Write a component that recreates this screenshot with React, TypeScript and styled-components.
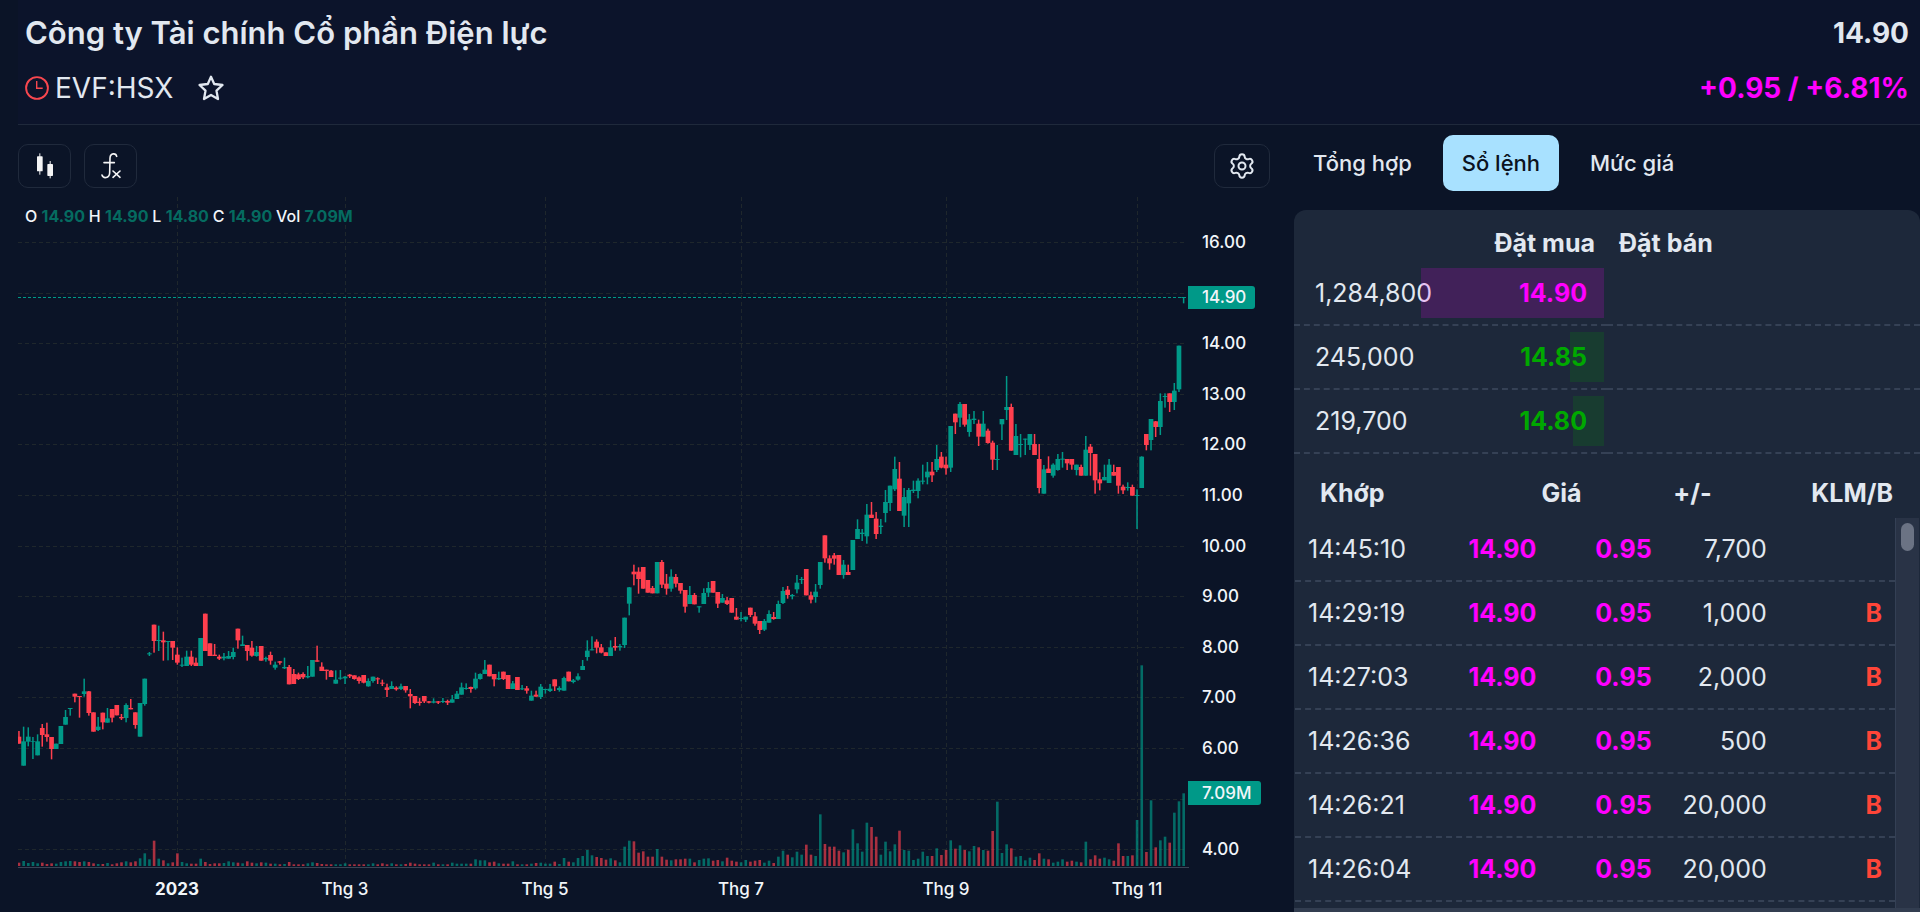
import React from "react";
import styled, { createGlobalStyle } from "styled-components";
import { Settings } from "lucide-react";

const colors = {
  page: "#0b1427",
  header: "#0c142b",
  panel: "#1d283a",
  track: "#293346",
  line: "#1f293b",
  rowLine: "#354155",
  text: "#e2e8f0",
  ceiling: "#ff00ff",
  up: "#00a800",
  sell: "#ff4538",
  candleUp: "#009988",
  candleDown: "#ff3f4e",
};

const GlobalStyle = createGlobalStyle`
  * { box-sizing: border-box; }
  body {
    margin: 0;
    background: ${colors.page};
    color: ${colors.text};
    font-family: Inter, "Noto Sans", sans-serif;
  }
  button { font: inherit; color: inherit; cursor: pointer; }
`;

const Page = styled.div`
  min-height: 100vh;
  display: flex;
  flex-direction: column;
  padding-left: 18px;
`;

const Header = styled.header`
  height: 125px;
  display: flex;
  justify-content: space-between;
  padding: 9px 11px 0 7px;
  background: ${colors.header};
  border-bottom: 1px solid ${colors.line};
`;

const HeaderSide = styled.div<{ $end?: boolean }>`
  display: flex;
  flex-direction: column;
  align-items: ${(p) => (p.$end ? "flex-end" : "flex-start")};
  gap: 7px;
`;

const Title = styled.h1`
  margin: 0;
  font-size: 31px;
  line-height: 48px;
  font-weight: 600;
`;

const Price = styled.div`
  font-size: 28px;
  line-height: 48px;
  font-weight: 700;
`;

const Change = styled(Price)`
  color: ${colors.ceiling};
`;

const SymbolRow = styled.div`
  display: flex;
  align-items: center;
  gap: 6px;
  font-size: 28px;
  line-height: 48px;
`;

const StarButton = styled.button`
  display: flex;
  margin-left: 18px;
  padding: 0;
  border: 0;
  background: none;
`;

const Main = styled.main`
  flex: 1;
  display: grid;
  grid-template-columns: minmax(0, 2fr) minmax(0, 1fr);
  column-gap: 24px;
`;

const ChartColumn = styled.section`
  padding-top: 19px;
`;

const Toolbar = styled.div`
  display: flex;
  gap: 13px;
`;

const ToolButton = styled.button<{ $last?: boolean }>`
  display: flex;
  align-items: center;
  justify-content: center;
  width: ${(p) => (p.$last ? 56 : 53)}px;
  height: 44px;
  margin-left: ${(p) => (p.$last ? "auto" : "0")};
  padding: 0;
  border: 1px solid #202a3c;
  border-radius: 10px;
  background: none;
`;

const Chart = styled.svg`
  display: block;
  width: 100%;
  height: auto;
  font-size: 17px;
  font-weight: 500;
  fill: #f1f5f9;
`;

const BookColumn = styled.section`
  display: flex;
  flex-direction: column;
  padding-top: 10px;
`;

const Tabs = styled.nav`
  display: flex;
  gap: 12px;
  margin-bottom: 19px;
`;

const Tab = styled.button<{ $active?: boolean }>`
  height: 56px;
  padding: 0 19px;
  border: 0;
  border-radius: 10px;
  font-size: 22px;
  font-weight: 500;
  background: ${(p) => (p.$active ? "#a8e1ff" : "none")};
  color: ${(p) => (p.$active ? "#0b1220" : colors.text)};
`;

const Panel = styled.div`
  flex: 1;
  display: flex;
  flex-direction: column;
  background: ${colors.panel};
  border-radius: 12px 12px 0 0;
  font-size: 25px;
  line-height: 32px;
  overflow: hidden;
`;

const Book = styled.table`
  width: 100%;
  table-layout: fixed;
  border-collapse: collapse;
`;

const BookHead = styled.th<{ $align: "left" | "right" }>`
  height: 51px;
  padding: 14px 12px 0;
  line-height: 34px;
  text-align: ${(p) => p.$align};
  font-weight: 700;
`;

const BookRow = styled.tr`
  height: 64px;
  border-bottom: 2px dashed ${colors.rowLine};
`;

const BookCell = styled.td`
  padding: 0;
`;

const Bid = styled.div`
  position: relative;
  display: flex;
  align-items: center;
  justify-content: space-between;
  height: 50px;
  margin-right: 3px;
  padding: 0 17px 0 21px;
`;

const DepthBar = styled.span<{ $tone: string }>`
  position: absolute;
  top: 0;
  right: 0;
  bottom: 0;
  background: ${(p) => p.$tone};
  opacity: 0.16;
`;

const BidPrice = styled.strong<{ $tone: string }>`
  font-weight: 700;
  color: ${(p) => p.$tone};
`;

const TradesBox = styled.div`
  position: relative;
  flex: 1;
  display: flex;
`;

const Trades = styled.table`
  flex: 1;
  display: flex;
  flex-direction: column;
`;

const TradesHead = styled.thead`
  display: block;
`;

const HeadRow = styled.tr`
  display: grid;
  grid-template-columns: 150fr 149fr 130fr 181fr;
  height: 64px;
  padding: 22px 15px 0 0;
`;

const HeadCell = styled.th`
  display: flex;
  justify-content: flex-end;
  padding-right: 12px;
  font-weight: 700;
  &:first-child {
    justify-content: flex-start;
    padding-left: 26px;
  }
`;

const TradesBody = styled.tbody`
  flex: 1;
  display: block;
  min-height: 390px;
  padding-left: 1px;
`;

const TradeRow = styled.tr`
  display: grid;
  grid-template-columns: 139fr 115fr 115fr 115fr 115fr;
  align-items: center;
  height: 64px;
  margin-right: 25px;
  border-bottom: 2px dashed ${colors.rowLine};
`;

const TradeCell = styled.td<{ $tone?: string }>`
  padding: 0 13px;
  text-align: right;
  color: ${(p) => p.$tone ?? "inherit"};
  font-weight: ${(p) => (p.$tone ? 700 : 400)};
  white-space: nowrap;
  &:first-child {
    text-align: left;
  }
`;

const ScrollTrack = styled.div`
  position: absolute;
  top: 64px;
  right: 1px;
  bottom: 0;
  width: 24px;
  padding: 5px 5px 0 5px;
  background: ${colors.track};
  border-left: 1px solid #344055;
`;

const ScrollThumb = styled.div`
  width: 13px;
  height: 28px;
  border-radius: 7px;
  background: #6b7384;
`;

const BottomTrack = styled.div`
  height: 4px;
  background: #323d50;
`;

type Candle = [string, number, number, number, number, number];

/* Each entry: direction, high, body top, body bottom, low, volume. All lengths are in thirds of a chart unit. */
const series: { base: number; rows: string }[] = [
  {
    base: 560,
    rows: `r513,530,551,551,10 g500,544,617,617,15 g502,530,545,559,9 g531,544,546,597,12 g523,544,586,586,8 r492,504,525,560,10
r488,523,531,545,6 r531,531,567,598,8 g551,551,567,567,7 g498,498,552,552,12 g450,471,494,494,14 g444,444,447,467,15
r401,401,410,427,14 r408,408,411,473,12 g356,394,402,410,14 r393,394,459,467,12 r457,457,515,515,8 g471,500,510,513,6
r458,458,487,508,6 g444,475,488,488,9 r447,447,473,487,5 r435,435,466,466,8 r462,471,475,480,11 g430,435,474,487,14
r417,444,448,448,11 r457,457,495,506,14 g429,429,530,530,23 g356,356,432,437,38 g276,280,283,288,20 r194,194,243,278,76
g197,240,243,273,22 r215,241,247,302,17 g243,243,246,301,8 r243,243,263,300,11 r262,284,308,314,38 g293,314,317,321,12
g272,290,318,318,8 r272,290,314,318,7 r293,308,318,318,7 g234,234,318,318,22 r161,161,273,273,12 r250,250,288,288,6
r252,284,288,288,8 r284,290,296,300,8 g279,290,295,301,9 g273,288,296,296,14 g263,276,291,298,11 r206,206,241,266,10
g227,253,258,258,8 r255,255,273,302,14 r243,263,287,290,10 g258,276,288,290,8 r258,258,302,302,11 g290,294,298,305,10
r275,285,302,314,7 g305,314,323,329,7 r303,304,308,314,5 g293,321,325,327,6 r315,321,373,373,12 r327,342,372,372,5
r338,343,357,360,5 r337,342,352,357,5 g318,348,352,355,8 g300,300,350,350,11 r257,301,305,305,9`,
  },
  {
    base: 600,
    rows: `r187,200,213,213,6 r209,209,213,239,5 r210,212,231,231,5 g211,239,251,251,5 g210,233,236,239,5 g228,230,235,252,8
r222,224,229,234,5 r226,226,237,239,5 r229,232,243,251,5 r225,225,248,250,5 g235,243,259,260,5 g230,230,243,248,8
r232,235,238,252,5 r239,248,251,258,8 r251,262,270,291,5 g244,258,267,267,8 r259,263,268,272,5 g251,259,267,270,5
r258,258,271,278,6 r267,282,289,325,10 r288,288,309,312,7 r294,305,309,317,5 r288,288,304,309,5 r303,304,308,310,5
g295,304,308,310,10 r303,304,308,312,5 g294,303,306,309,5 r299,303,308,315,5 g285,298,308,308,10 g273,281,297,297,7
g248,262,284,284,7 g250,264,267,269,7 r260,261,267,278,7 g218,236,265,269,20 g220,222,237,239,17 g180,209,222,222,17
r194,194,229,229,11 r222,222,238,259,13 g215,234,238,240,8 r215,215,237,240,7 r225,225,267,267,7 g243,250,267,267,14
r231,231,270,270,5 g255,265,268,270,5 r258,265,272,281,5 g272,287,302,302,7 r272,284,290,290,9 g252,260,291,297,10
g266,267,270,281,7 g252,266,273,276,7 r238,238,259,273,13 g259,264,270,275,6 g230,234,272,272,24 r215,215,244,244,13
g237,241,246,250,11 g220,229,239,242,24 g180,198,210,210,30 g121,152,171,182,48 g109,148,151,151,32 r118,125,143,160,27
r132,142,158,160,24 r157,157,168,168,19 g121,142,168,168,23 r111,138,143,152,17`,
  },
  {
    base: 520,
    rows: `g372,378,382,392,11 g293,293,375,384,58 g201,202,251,286,76 r134,155,163,196,74 r142,155,177,221,40 r141,141,206,206,44
r180,180,218,218,28 r198,204,220,220,28 g126,126,220,220,51 r120,126,194,204,28 r162,191,206,224,19 g148,170,206,215,17
r162,171,191,202,20 r189,189,212,221,20 r210,210,260,278,22 g198,225,252,252,22 r219,225,253,253,11 g259,259,262,278,18
g205,219,252,252,22 g186,204,218,231,23 r183,183,218,218,16 r216,216,251,264,18 g222,234,248,248,14 r231,241,252,255,25
r234,234,278,278,16 r264,290,299,299,13 g276,294,297,304,11 g290,290,299,306,18 r263,263,285,291,13 r276,289,311,317,16
r303,303,330,342,18 g297,303,329,333,10 g271,282,308,308,16 r276,291,297,299,9 g242,252,297,297,28 g201,213,249,252,46
r198,209,225,236,34 g222,225,229,238,26 g165,188,208,220,43 g171,177,180,192,34 r147,147,226,226,64 r215,226,239,250,34
g192,215,231,248,30 g126,126,195,206,155 r46,46,115,128,66 r106,115,130,149,58 r99,106,116,134,58 r105,105,165,165,46
g120,134,165,176,41 r134,156,165,165,49 g60,60,150,150,110 g-2,27,57,57,68`,
  },
  {
    base: 360,
    rows: `g507,518,522,543,43 g432,464,529,551,130 r426,464,474,474,117 r456,476,522,537,88 g477,497,501,522,34 g390,426,459,487,73
g377,377,429,453,44 g290,327,388,393,65 r306,356,453,453,106 g384,411,467,501,48 g384,390,430,501,46 g362,389,393,399,18
g355,362,393,415,22 g314,362,365,373,43 g306,335,352,373,30 r306,335,346,366,30 g255,297,330,336,53 r276,290,323,325,33
r290,314,325,344,48 g198,198,323,336,77 r161,161,187,222,52 g126,132,173,201,62 r132,132,194,200,48 g162,178,216,230,44
g153,176,180,192,60 r179,191,230,258,56 g153,191,230,230,48 r206,212,249,251,46 r242,248,299,330,105 g255,297,300,330,193
g177,177,193,240,39 g48,141,150,180,65 r131,141,272,272,53`,
  },
  {
    base: 320,
    rows: `g312,348,405,405,28 g342,372,375,412,30 g356,356,359,405,17 g342,342,375,390,25 r342,372,405,405,18 r372,417,504,520,38
g435,448,521,521,22 r409,446,459,459,20 g430,434,467,473,10 g402,417,450,452,13 g396,416,419,443,20 r417,417,430,450,13
r417,417,434,449,16 g434,434,450,466,13 r434,441,467,467,11 g348,389,467,467,73 r372,380,399,467,20 r402,402,481,521,32
r457,478,490,511,22 g434,471,481,481,25 g417,434,489,489,20 r434,456,467,467,16 r441,441,497,521,68 r494,500,511,522,30
g487,501,504,512,30 r494,501,527,527,32 g508,525,528,627,138 g409,410,504,504,602 r342,342,375,391,42 g297,297,360,391,197
r303,304,321,351,56 g220,243,321,345,77 g220,228,231,263,88 r220,220,246,276,70 g189,212,246,270,160 g77,77,208,216,194
g-69,-69,-66,-50,218`,
  },
];

const candles: Candle[] = series.flatMap(({ base, rows }) =>
  rows.split(/\s+/).map((entry): Candle => {
    const [high, top, bottom, low, volume] = entry.slice(1).split(",").map(Number);
    const at = (v: number) => base + v / 3;
    return [entry[0], at(high), at(top), at(bottom), at(low), volume / 3];
  }),
);

const candleX = (i: number) => 18.9 + i * 4.6587;
const priceY = (price: number) => 242 + (16 - price) * 50.6;
const prices = Array.from({ length: 13 }, (_, i) => 16 - i);
const months = [
  { label: "2023", x: 177 },
  { label: "Thg 3", x: 345 },
  { label: "Thg 5", x: 545 },
  { label: "Thg 7", x: 741 },
  { label: "Thg 9", x: 946 },
  { label: "Thg 11", x: 1137 },
];
const legend = [
  ["O", "14.90"],
  ["H", "14.90"],
  ["L", "14.80"],
  ["C", "14.90"],
  ["Vol", "7.09M"],
];

function PriceChart() {
  return (
    <Chart viewBox="18 188 1252 724" role="img" aria-label="EVF:HSX">
      <clipPath id="plot">
        <rect x="18" y="188" width="1170" height="700" />
      </clipPath>
      <g stroke="#1f272c" strokeWidth="1" strokeDasharray="4 3">
        {prices.map((p) => (
          <line key={p} x1="18" x2="1187" y1={Math.round(priceY(p)) + 0.5} y2={Math.round(priceY(p)) + 0.5} />
        ))}
        {months.map((m) => (
          <line key={m.x} x1={m.x + 0.5} x2={m.x + 0.5} y1="197" y2="866" />
        ))}
      </g>
      <g clipPath="url(#plot)">
        {candles.map(([dir, high, top, bottom, low, volume], i) => {
          const x = candleX(i);
          const fill = dir === "g" ? colors.candleUp : colors.candleDown;
          return (
            <g key={i} fill={fill}>
              <rect x={x - 1.2} y={866 - volume} width="2.6" height={volume} opacity="0.65" />
              <rect x={x - 0.7} y={high} width="1.5" height={low - high} />
              <rect x={x - 2.3} y={top} width="4.7" height={bottom - top} />
            </g>
          );
        })}
      </g>
      <line x1="18" x2="1187" y1="297.5" y2="297.5" stroke={colors.candleUp} strokeDasharray="3 2" />
      <line x1="18" x2="1189" y1="867.5" y2="867.5" stroke="#3a4455" />
      {prices
        .filter((p) => p !== 15 && p !== 5)
        .map((p) => (
          <text key={p} x="1202" y={priceY(p) + 6}>
            {p.toFixed(2)}
          </text>
        ))}
      <path d="M1188 286h64q3 0 3 3v17q0 3-3 3h-64z" fill={colors.candleUp} />
      <text x="1202" y="303">14.90</text>
      <path d="M1188 781h70q3 0 3 3v18q0 3-3 3h-70z" fill={colors.candleUp} />
      <text x="1202" y="799">7.09M</text>
      {months.map((m, i) => (
        <text key={m.label} x={m.x} y="895" textAnchor="middle" fontWeight={i === 0 ? 700 : 500}>
          {m.label}
        </text>
      ))}
      <text x="25" y="222" fontSize="16">
        {legend.map(([name, value]) => (
          <React.Fragment key={name}>
            <tspan>{name} </tspan>
            <tspan fill="#056b60" fontWeight="700">
              {value}{" "}
            </tspan>
          </React.Fragment>
        ))}
      </text>
    </Chart>
  );
}

function ClockIcon() {
  return (
    <svg width="24" height="24" viewBox="0 0 24 24" fill="none" stroke="#f8474f" strokeWidth="1.9" aria-hidden="true">
      <circle cx="12" cy="12" r="10.900" />
      <path d="M11.7 5v7.2h6" strokeWidth="1.4" />
    </svg>
  );
}

function StarIcon() {
  return (
    <svg width="28" height="28" viewBox="0 0 28 28" fill="none" stroke="currentColor" strokeWidth="2.3" strokeLinejoin="round" aria-hidden="true">
      <path d="M14 2.800l3.200 7.200 8.300 1-6 5.700 1.500 8.300-7-4-7 4 1.500-8.300-6-5.700 8.300-1z" />
    </svg>
  );
}

function CandlesIcon() {
  return (
    <svg width="26" height="26" viewBox="-39 -39 78 78" fill="#f4f4f5" aria-hidden="true">
      <rect x="-24" y="-29" width="17" height="45" rx="2" />
      <rect x="-17" y="-38" width="3" height="64" />
      <rect x="7" y="-6" width="17" height="36" rx="2" />
      <rect x="14" y="-15" width="3" height="52" />
    </svg>
  );
}

function FormulaIcon() {
  return (
    <svg width="26" height="26" viewBox="-39 -39 78 78" fill="none" stroke="#f4f4f5" strokeWidth="4.800" strokeLinecap="round" aria-hidden="true">
      <path d="M17 -29C15 -39 -2 -40 -3 -24L-4 21C-5 37 -23 39 -27 27M-21 -10H10M6 15L27 34M27 15L6 34" />
    </svg>
  );
}

const bids = [
  { qty: "1,284,800", price: "14.90", depth: 59, tone: colors.ceiling },
  { qty: "245,000", price: "14.85", depth: 11, tone: colors.up },
  { qty: "219,700", price: "14.80", depth: 10, tone: colors.up },
];

const trades = [
  { time: "14:45:10", qty: "7,700", side: "" },
  { time: "14:29:19", qty: "1,000", side: "B" },
  { time: "14:27:03", qty: "2,000", side: "B" },
  { time: "14:26:36", qty: "500", side: "B" },
  { time: "14:26:21", qty: "20,000", side: "B" },
  { time: "14:26:04", qty: "20,000", side: "B" },
];

export default function App() {
  return (
    <>
      <GlobalStyle />
      <Page>
        <Header>
          <HeaderSide>
            <Title>Công ty Tài chính Cổ phần Điện lực</Title>
            <SymbolRow>
              <ClockIcon />
              <span>EVF:HSX</span>
              <StarButton aria-label="Theo dõi">
                <StarIcon />
              </StarButton>
            </SymbolRow>
          </HeaderSide>
          <HeaderSide $end>
            <Price>14.90</Price>
            <Change>+0.95 / +6.81%</Change>
          </HeaderSide>
        </Header>
        <Main>
          <ChartColumn>
            <Toolbar>
              <ToolButton aria-label="Kiểu biểu đồ">
                <CandlesIcon />
              </ToolButton>
              <ToolButton aria-label="Chỉ báo">
                <FormulaIcon />
              </ToolButton>
              <ToolButton $last aria-label="Cài đặt">
                <Settings size={28} strokeWidth={1.7} />
              </ToolButton>
            </Toolbar>
            <PriceChart />
          </ChartColumn>
          <BookColumn>
            <Tabs>
              <Tab>Tổng hợp</Tab>
              <Tab $active>Sổ lệnh</Tab>
              <Tab>Mức giá</Tab>
            </Tabs>
            <Panel>
              <Book>
                <thead>
                  <tr>
                    <BookHead $align="right">Đặt mua</BookHead>
                    <BookHead $align="left">Đặt bán</BookHead>
                  </tr>
                </thead>
                <tbody>
                  {bids.map((bid) => (
                    <BookRow key={bid.price}>
                      <BookCell>
                        <Bid>
                          <span>{bid.qty}</span>
                          <BidPrice $tone={bid.tone}>{bid.price}</BidPrice>
                          <DepthBar $tone={bid.tone} style={{ width: `${bid.depth}%` }} />
                        </Bid>
                      </BookCell>
                      <BookCell />
                    </BookRow>
                  ))}
                </tbody>
              </Book>
              <TradesBox>
                <Trades>
                  <TradesHead>
                    <HeadRow>
                      <HeadCell>Khớp</HeadCell>
                      <HeadCell>Giá</HeadCell>
                      <HeadCell>+/-</HeadCell>
                      <HeadCell>KLM/B</HeadCell>
                    </HeadRow>
                  </TradesHead>
                  <TradesBody>
                    {trades.map((t) => (
                      <TradeRow key={t.time}>
                        <TradeCell>{t.time}</TradeCell>
                        <TradeCell $tone={colors.ceiling}>14.90</TradeCell>
                        <TradeCell $tone={colors.ceiling}>0.95</TradeCell>
                        <TradeCell>{t.qty}</TradeCell>
                        <TradeCell $tone={colors.sell}>{t.side}</TradeCell>
                      </TradeRow>
                    ))}
                  </TradesBody>
                </Trades>
                <ScrollTrack>
                  <ScrollThumb />
                </ScrollTrack>
              </TradesBox>
              <BottomTrack />
            </Panel>
          </BookColumn>
        </Main>
      </Page>
    </>
  );
}
